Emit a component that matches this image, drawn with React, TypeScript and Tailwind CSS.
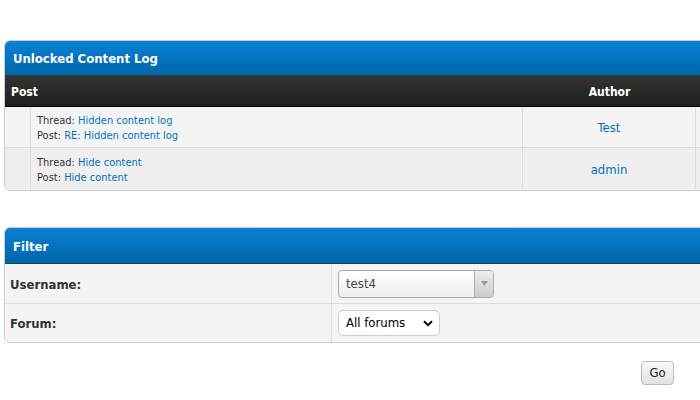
import React from "react";

const font = { fontFamily: '"DejaVu Sans Condensed", "DejaVu Sans", Tahoma, sans-serif', fontStretch: "condensed" as const };

export default function App() {
  return (
    <div className="w-[700px] h-[400px] overflow-hidden bg-white relative" style={font}>
      <div className="pt-[40px] pl-[4px] w-[820px]">
        {/* Log table */}
        <div className="border border-[#cccccc] rounded-[6px] overflow-hidden bg-white">
          <div className="h-[35px] flex items-center pl-[8px] pt-[1px] text-white font-bold text-[13px] bg-gradient-to-b from-[#0a81d6] to-[#0066a8] border-b border-[#263c55]">
            Unlocked Content Log
          </div>
          <div className="h-[31px] flex text-white font-bold text-[12px] bg-gradient-to-b from-[#333333] to-[#202020] border-b border-black">
            <div className="w-[518px] flex items-center pl-[6px] pt-[1px]">Post</div>
            <div className="w-[173px] flex items-center justify-center pt-[1px]">Author</div>
            <div className="flex-1"></div>
          </div>
          <Row bg="bg-[#f4f4f4]" h="h-[41px]" thread="Hidden content log" post="RE: Hidden content log" author="Test" border />
          <Row bg="bg-[#efefef]" h="h-[42px]" thread="Hide content" post="Hide content" author="admin" />
        </div>

        {/* Filter */}
        <div className="mt-[36px] border border-[#cccccc] rounded-[6px] overflow-hidden bg-white">
          <div className="h-[36px] flex items-center pl-[8px] pt-[2px] text-white font-bold text-[13px] bg-gradient-to-b from-[#0a81d6] to-[#0066a8] border-b border-[#263c55]">
            Filter
          </div>
          <div className="flex h-[40px] bg-[#f4f4f4] border-b border-[#dddddd]">
            <div className="w-[327px] border-r border-[#dddddd] flex items-center pl-[5px] pt-[2px] font-bold text-[13px] text-[#333333]">
              Username:
            </div>
            <div className="flex-1 flex items-center pl-[6px]">
              <div className="w-[156px] h-[28px] border border-[#aaaaaa] rounded-[4px] flex overflow-hidden bg-gradient-to-b from-white to-[#eeeeee]">
                <div className="flex-1 flex items-center pl-[7px] text-[13px] text-[#444444]">test4</div>
                <div className="w-[19px] border-l border-[#aaaaaa] bg-gradient-to-b from-[#eeeeee] to-[#cccccc] flex items-center justify-center">
                  <svg width="7" height="5" viewBox="0 0 7 5"><path d="M0 0h7L3.5 5z" fill="#999999" /></svg>
                </div>
              </div>
            </div>
          </div>
          <div className="flex h-[38px] bg-[#f4f4f4]">
            <div className="w-[327px] border-r border-[#dddddd] flex items-center pl-[5px] pt-[1px] font-bold text-[13px] text-[#333333]">
              Forum:
            </div>
            <div className="flex-1 flex items-center pl-[6px]">
              <div className="w-[102px] h-[26px] border border-[#cccccc] rounded-[5px] bg-white flex items-center pl-[7px] pr-[6px] text-[13px] text-black">
                <span className="flex-1">All forums</span>
                <svg width="10" height="7" viewBox="0 0 10 7"><path d="M1 1.2l4 4 4-4" fill="none" stroke="#000" strokeWidth="2" /></svg>
              </div>
            </div>
          </div>
        </div>
      </div>
      <div className="absolute left-[641px] top-[361px] w-[33px] h-[24px] border border-[#bbbbbb] rounded-[4px] bg-gradient-to-b from-[#f8f8f8] to-[#e2e2e2] flex items-center justify-center text-[13px] text-[#222222]">
        Go
      </div>
    </div>
  );
}

function Row({ bg, h, thread, post, author, border }: { bg: string; h: string; thread: string; post: string; author: string; border?: boolean }) {
  return (
    <div className={`flex ${h} ${bg} ${border ? "border-b border-[#dddddd]" : ""}`}>
      <div className="w-[26px] border-r border-[#dddddd]"></div>
      <div className="w-[492px] border-r border-[#dddddd] flex flex-col justify-center pl-[6px] pt-[2px] text-[11px] leading-[15px] text-[#333333]">
        <div>Thread: <span className="text-[#0072bc]">{thread}</span></div>
        <div>Post: <span className="text-[#0072bc]">{post}</span></div>
      </div>
      <div className="w-[173px] border-r border-[#dddddd] flex items-center justify-center pt-[2px] text-[13px] text-[#0072bc]">
        {author}
      </div>
      <div className="flex-1"></div>
    </div>
  );
}
